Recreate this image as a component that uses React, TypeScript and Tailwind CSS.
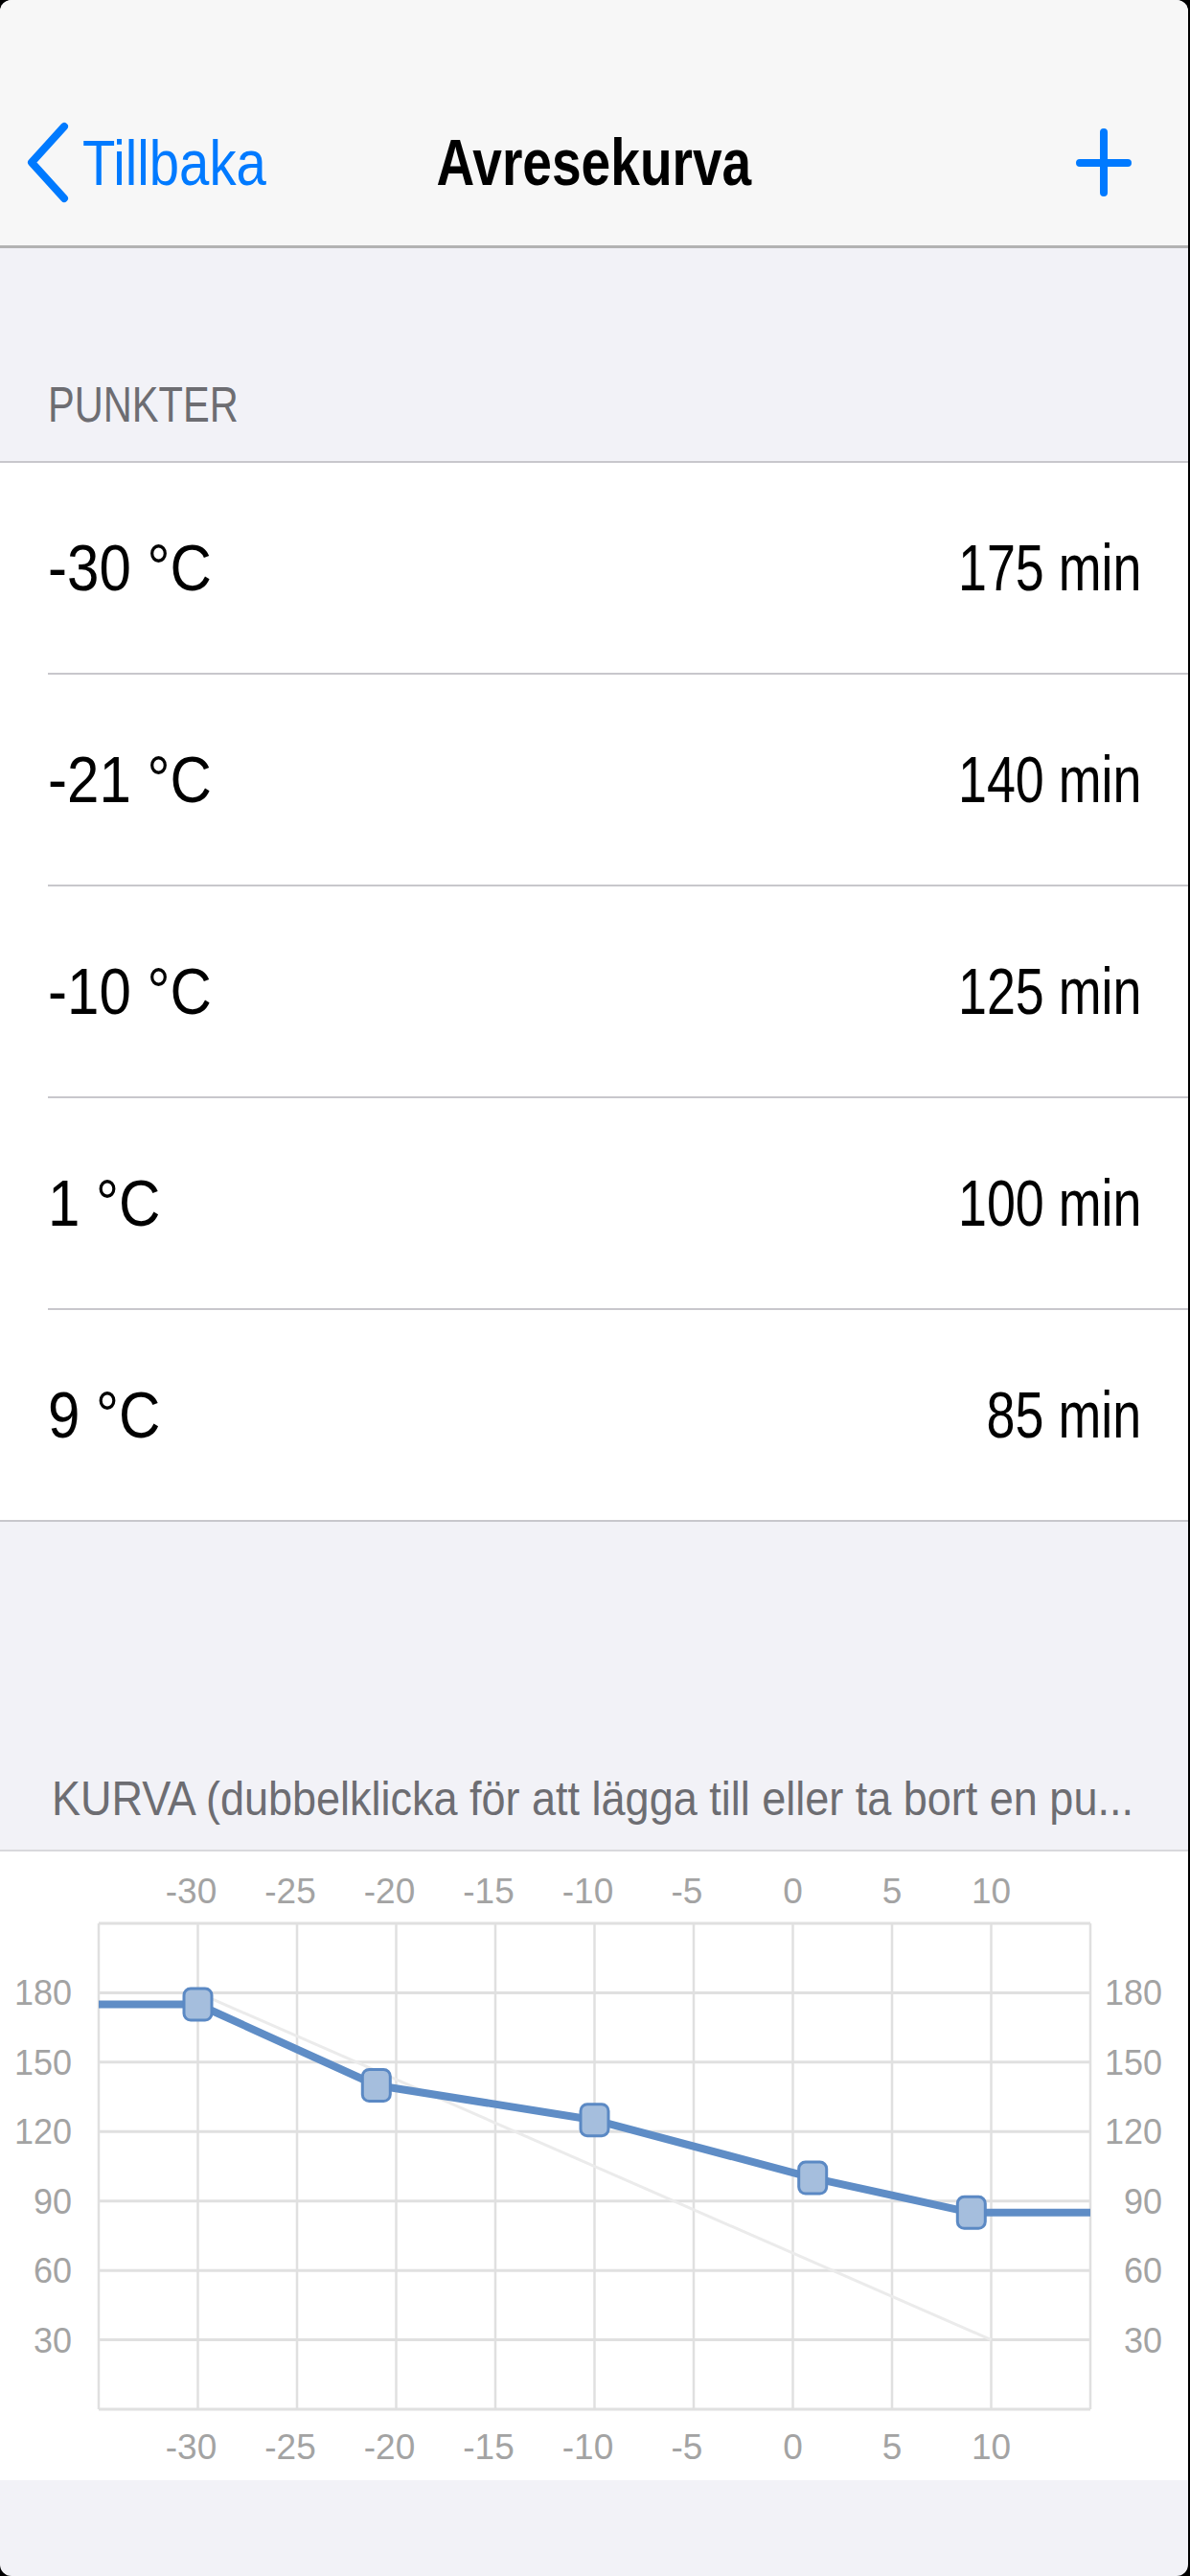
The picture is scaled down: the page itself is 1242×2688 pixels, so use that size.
import React from "react";

const SANS = "font-['Liberation_Sans',Arial,sans-serif]";

const rows = [
  { temp: "-30 °C", time: "175 min" },
  { temp: "-21 °C", time: "140 min" },
  { temp: "-10 °C", time: "125 min" },
  { temp: "1 °C", time: "100 min" },
  { temp: "9 °C", time: "85 min" },
];

// chart geometry (svg coords)
const X0 = 103;
const DX = 20.7;
const Y0 = 582;
const DY = 507 / 210;
const px = (t: number) => X0 + (t + 35) * DX;
const py = (v: number) => Y0 - v * DY;
const points: [number, number][] = [
  [-30, 175],
  [-21, 140],
  [-10, 125],
  [1, 100],
  [9, 85],
];
const xTicks = [-30, -25, -20, -15, -10, -5, 0, 5, 10];
const yTicks = [180, 150, 120, 90, 60, 30];

function Chart() {
  const vLines = [];
  for (let t = -35; t <= 15; t += 5) vLines.push(t);
  const hLines = [];
  for (let v = 0; v <= 210; v += 30) hLines.push(v);

  const path =
    `M ${X0} ${py(175)} ` +
    points.map(([t, v]) => `L ${px(t)} ${py(v)}`).join(" ") +
    ` L ${px(15)} ${py(85)}`;

  return (
    <svg width="1240" height="656" viewBox="0 0 1240 656" className={SANS}>
      {hLines.map((v) => (
        <line key={"h" + v} x1={X0} x2={px(15)} y1={py(v)} y2={py(v)} stroke="#e0e0e0" strokeWidth="3" />
      ))}
      {vLines.map((t) => (
        <line key={"v" + t} x1={px(t)} x2={px(t)} y1={py(210)} y2={py(0)} stroke="#e0e0e0" strokeWidth="2.5" />
      ))}
      <line x1={px(-30)} y1={py(180)} x2={px(10)} y2={py(30)} stroke="#ebebeb" strokeWidth="3" />
      <path d={path} fill="none" stroke="#5f8dc6" strokeWidth="8" strokeLinejoin="round" />
      {points.map(([t, v]) => (
        <rect
          key={t}
          x={px(t) - 14.5}
          y={py(v) - 16.5}
          width="29"
          height="33"
          rx="7"
          fill="#a5bedd"
          stroke="#5b89c4"
          strokeWidth="3"
        />
      ))}
      {xTicks.map((t) => (
        <g key={"xt" + t} fill="#a3a3a3" fontSize="37">
          <text x={px(t) - (t < 0 ? 7 : 0)} y="54" textAnchor="middle">
            {t}
          </text>
          <text x={px(t) - (t < 0 ? 7 : 0)} y="634" textAnchor="middle">
            {t}
          </text>
        </g>
      ))}
      {yTicks.map((v) => (
        <g key={"yt" + v} fill="#a3a3a3" fontSize="36">
          <text x="75" y={py(v) + 13} textAnchor="end">
            {v}
          </text>
          <text x="1213" y={py(v) + 13} textAnchor="end">
            {v}
          </text>
        </g>
      ))}
    </svg>
  );
}

export default function App() {
  return (
    <div className="bg-black w-[1242px] h-[2688px]">
      <div className={`w-[1240px] h-[2688px] rounded-[12px] overflow-hidden bg-[#f2f2f7] ${SANS}`}>
        {/* nav bar */}
        <div className="h-[259px] bg-[#f7f7f7] border-b-[3px] border-[#b3b3b3] pt-[110px] pb-[28px]">
          <div className="grid grid-cols-[1fr_auto_1fr] items-center h-[118px]">
            <div className="flex items-center pl-[25px] gap-[13px] text-[#007aff]">
              <svg width="48" height="90" viewBox="0 0 48 90">
                <path d="M42 8 L8 45.5 L42 83" fill="none" stroke="#007aff" strokeWidth="8" strokeLinecap="round" strokeLinejoin="round" />
              </svg>
              <span className="inline-block origin-left scale-x-[0.84] text-[67px] leading-none">Tillbaka</span>
            </div>
            <div className="inline-block origin-center scale-x-[0.81] text-[68px] leading-none font-bold text-black">
              Avresekurva
            </div>
            <div className="flex justify-end pr-[58px]">
              <svg width="60" height="75" viewBox="0 0 60 75">
                <path d="M30 6 V69 M5 38 H55" fill="none" stroke="#007aff" strokeWidth="8" strokeLinecap="round" />
              </svg>
            </div>
          </div>
        </div>

        {/* punkter header */}
        <div className="h-[222px] flex items-end pb-[33px] pl-[50px]">
          <span className="inline-block origin-left scale-x-[0.8] text-[52px] leading-none text-[#6d6d72]">PUNKTER</span>
        </div>

        {/* points list */}
        <div className="bg-white border-y-2 border-[#c8c7cc]">
          {rows.map((r, i) => (
            <div key={r.temp} className="pl-[50px]">
              <div
                className={`flex items-center justify-between pr-[49px] text-[69px] leading-none text-black ${
                  i < rows.length - 1 ? "h-[221px] border-b-2 border-[#c8c7cc]" : "h-[219px]"
                }`}
              >
                <span className="inline-block origin-left scale-x-[0.87]">{r.temp}</span>
                <span className="inline-block origin-right scale-x-[0.78]">{r.time}</span>
              </div>
            </div>
          ))}
        </div>

        {/* kurva header */}
        <div className="h-[342px] flex items-end pb-[28px] pl-[54px]">
          <span className="inline-block origin-left scale-x-[0.9] text-[50px] leading-none text-[#6d6d72] whitespace-nowrap">
            KURVA (dubbelklicka för att lägga till eller ta bort en pu...
          </span>
        </div>

        {/* chart */}
        <div className="bg-white border-t-2 border-[#d8d8dc]">
          <Chart />
        </div>
      </div>
    </div>
  );
}
